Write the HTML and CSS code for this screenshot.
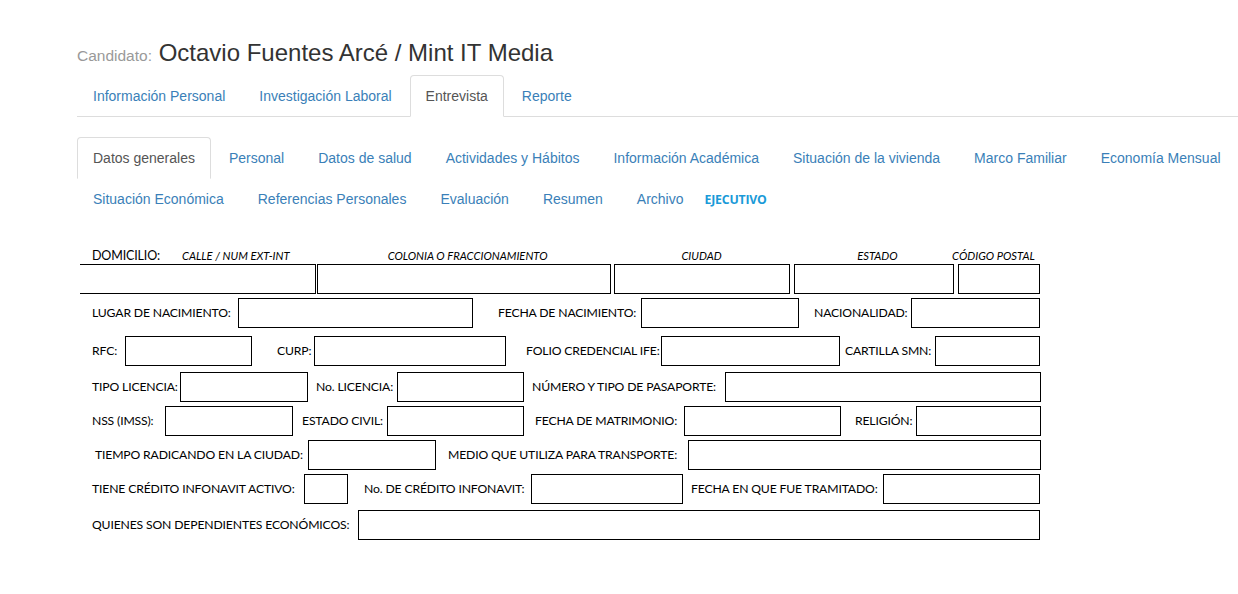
FILE: index.html
```html
<!DOCTYPE html>
<html lang="es">
<head>
<meta charset="utf-8">
<title>Entrevista - Datos generales</title>
<link rel="stylesheet" href="styles.css">
</head>
<body>
<div class="page">
  <h1 class="title"><small class="title-pre">Candidato:</small> Octavio Fuentes Arcé / Mint IT Media</h1>

  <ul class="tabs main-tabs">
    <li><a href="#">Información Personal</a></li>
    <li><a href="#">Investigación Laboral</a></li>
    <li class="active"><a href="#">Entrevista</a></li>
    <li><a href="#">Reporte</a></li>
  </ul>

  <div class="subtabs">
    <ul class="tabs sub-row">
      <li class="active"><a href="#">Datos generales</a></li>
      <li><a href="#">Personal</a></li>
      <li><a href="#">Datos de salud</a></li>
      <li><a href="#">Actividades y Hábitos</a></li>
      <li><a href="#">Información Académica</a></li>
      <li><a href="#">Situación de la vivienda</a></li>
      <li><a href="#">Marco Familiar</a></li>
      <li><a href="#">Economía Mensual</a></li>
    </ul>
    <ul class="tabs sub-row second">
      <li><a href="#">Situación Económica</a></li>
      <li><a href="#">Referencias Personales</a></li>
      <li><a href="#">Evaluación</a></li>
      <li><a href="#">Resumen</a></li>
      <li><a href="#">Archivo</a></li>
      <li class="exec"><a href="#">EJECUTIVO</a></li>
    </ul>
  </div>

  <div class="form">
    <div class="hrow">
      <span class="dom">DOMICILIO:</span>
      <span class="hint h-calle">CALLE / NUM EXT-INT</span>
      <span class="hint h-col">COLONIA O FRACCIONAMIENTO</span>
      <span class="hint h-ciu">CIUDAD</span>
      <span class="hint h-edo">ESTADO</span>
      <span class="hint h-cp">CÓDIGO POSTAL</span>
    </div>
    <div class="row r1">
      <span class="box b-calle"></span>
      <span class="box b-col"></span>
      <span class="box b-ciu"></span>
      <span class="box b-edo"></span>
      <span class="box b-cp"></span>
    </div>
    <div class="row r2">
      <span class="lbl lugar-l">LUGAR DE NACIMIENTO:</span><span class="box lugar-b"></span>
      <span class="lbl fnac-l">FECHA DE NACIMIENTO:</span><span class="box fnac-b"></span>
      <span class="lbl nac-l">NACIONALIDAD:</span><span class="box nac-b"></span>
    </div>
    <div class="row r3">
      <span class="lbl rfc-l">RFC:</span><span class="box rfc-b"></span>
      <span class="lbl curp-l">CURP:</span><span class="box curp-b"></span>
      <span class="lbl ife-l">FOLIO CREDENCIAL IFE:</span><span class="box ife-b"></span>
      <span class="lbl smn-l">CARTILLA SMN:</span><span class="box smn-b"></span>
    </div>
    <div class="row r4">
      <span class="lbl tlic-l">TIPO LICENCIA:</span><span class="box tlic-b"></span>
      <span class="lbl nlic-l">No. LICENCIA:</span><span class="box nlic-b"></span>
      <span class="lbl pas-l">NÚMERO Y TIPO DE PASAPORTE:</span><span class="box pas-b"></span>
    </div>
    <div class="row r5">
      <span class="lbl nss-l">NSS (IMSS):</span><span class="box nss-b"></span>
      <span class="lbl civ-l">ESTADO CIVIL:</span><span class="box civ-b"></span>
      <span class="lbl mat-l">FECHA DE MATRIMONIO:</span><span class="box mat-b"></span>
      <span class="lbl rel-l">RELIGIÓN:</span><span class="box rel-b"></span>
    </div>
    <div class="row r6">
      <span class="lbl rad-l">TIEMPO RADICANDO EN LA CIUDAD:</span><span class="box rad-b"></span>
      <span class="lbl tra-l">MEDIO QUE UTILIZA PARA TRANSPORTE:</span><span class="box tra-b"></span>
    </div>
    <div class="row r7">
      <span class="lbl act-l">TIENE CRÉDITO INFONAVIT ACTIVO:</span><span class="box act-b"></span>
      <span class="lbl ncr-l">No. DE CRÉDITO INFONAVIT:</span><span class="box ncr-b"></span>
      <span class="lbl tram-l">FECHA EN QUE FUE TRAMITADO:</span><span class="box tram-b"></span>
    </div>
    <div class="row r8">
      <span class="lbl dep-l">QUIENES SON DEPENDIENTES ECONÓMICOS:</span><span class="box dep-b"></span>
    </div>
  </div>
</div>
</body>
</html>
```

FILE: styles.css
```css
* { box-sizing: border-box; }

html, body {
  margin: 0;
  padding: 0;
  background: #fff;
}

body {
  font-family: "Liberation Sans", Arial, sans-serif;
  font-size: 14px;
  line-height: 20px;
  color: #333;
}

.page {
  padding: 39px 0 0 77px;
}

.title {
  margin: 0 0 8px 0;
  height: 28px;
  font-size: 24px;
  line-height: 28px;
  font-weight: normal;
  color: #333;
  white-space: nowrap;
}

.title-pre {
  font-size: 15.5px;
  color: #999;
}

/* tabs */
.tabs {
  list-style: none;
  margin: 0;
  padding: 0;
  display: flex;
  white-space: nowrap;
}

.tabs li {
  margin-right: 2px;
}

.tabs a {
  display: block;
  padding: 10px 15px;
  line-height: 20px;
  border: 1px solid transparent;
  border-radius: 4px 4px 0 0;
  color: #3a7fb8;
  text-decoration: none;
}

.tabs li.active a {
  color: #555;
  background: #fff;
  border-color: #ddd #ddd transparent #ddd;
}

.main-tabs {
  border-bottom: 1px solid #ddd;
  height: 42px;
}

.main-tabs li {
  margin-bottom: -1px;
}

.subtabs {
  margin-top: 20px;
}

.sub-row.second {
  margin-top: -1px;
}

.tabs li.exec a {
  padding: 11px 2px 9px 2px;
  font-family: "Open Sans", "Noto Sans", sans-serif;
  font-size: 12.3px;
  font-weight: bold;
  color: #1a9ad8;
  letter-spacing: -0.2px;
}

/* form */
.form {
  margin: 28px 0 0 3px;
  width: 962px;
  font-family: Lato, "Noto Sans", sans-serif;
  font-size: 12.2px;
  letter-spacing: -0.15px;
  color: #000;
}

.hrow {
  display: flex;
  align-items: center;
  height: 16px;
  line-height: 16px;
  white-space: nowrap;
}

.dom {
  margin-left: 12px;
  width: 90px;
  font-size: 12.5px;
}

.hint {
  font-style: italic;
  font-size: 11.2px;
  letter-spacing: 0;
}

.h-calle { width: 206px; }
.h-col { width: 294px; }
.h-ciu { width: 176px; }
.h-edo { width: 95px; }
.h-cp { width: 90px; }

.row {
  display: flex;
  align-items: center;
  height: 30px;
  white-space: nowrap;
}

.r1 { margin-top: 0; }
.r2 { margin-top: 4px; }
.r3 { margin-top: 8px; }
.r4 { margin-top: 6px; }
.r5 { margin-top: 4px; }
.r6 { margin-top: 4px; }
.r7 { margin-top: 4px; }
.r8 { margin-top: 6px; }

.box {
  display: block;
  height: 30px;
  border: 1px solid #000;
  flex: none;
}

.lbl {
  display: block;
  flex: none;
  overflow: visible;
}

/* domicilio */
.b-calle { width: 236px; border-left: none; }
.b-col { margin-left: 1px; width: 294px; }
.b-ciu { margin-left: 3px; width: 176px; }
.b-edo { margin-left: 4px; width: 160px; }
.b-cp { margin-left: 4px; width: 82px; }

/* row 2 */
.lugar-l { margin-left: 12px; width: 146px; }
.lugar-b { width: 235px; }
.fnac-l { margin-left: 25px; width: 143px; }
.fnac-b { width: 158px; }
.nac-l { margin-left: 15px; width: 97px; }
.nac-b { width: 129px; }

/* row 3 */
.rfc-l { margin-left: 12px; width: 33px; }
.rfc-b { width: 127px; }
.curp-l { margin-left: 25px; width: 37px; }
.curp-b { width: 192px; }
.ife-l { margin-left: 20px; width: 135px; }
.ife-b { width: 179px; }
.smn-l { margin-left: 5px; width: 90px; }
.smn-b { width: 105px; }

/* row 4 */
.tlic-l { margin-left: 12px; width: 88px; }
.tlic-b { width: 128px; }
.nlic-l { margin-left: 8px; width: 81px; }
.nlic-b { width: 127px; }
.pas-l { margin-left: 8px; width: 193px; }
.pas-b { width: 316px; }

/* row 5 */
.nss-l { margin-left: 12px; width: 73px; }
.nss-b { width: 128px; }
.civ-l { margin-left: 9px; width: 85px; }
.civ-b { width: 137px; }
.mat-l { margin-left: 11px; width: 149px; }
.mat-b { width: 157px; }
.rel-l { margin-left: 14px; width: 61px; }
.rel-b { width: 125px; }

/* row 6 */
.rad-l { margin-left: 15px; width: 213px; }
.rad-b { width: 128px; }
.tra-l { margin-left: 12px; width: 240px; }
.tra-b { width: 353px; }

/* row 7 */
.act-l { margin-left: 12px; width: 212px; }
.act-b { width: 44px; }
.ncr-l { margin-left: 16px; width: 167px; }
.ncr-b { width: 152px; }
.tram-l { margin-left: 8px; width: 192px; }
.tram-b { width: 157px; }

/* row 8 */
.dep-l { margin-left: 12px; width: 266px; }
.dep-b { width: 682px; }
```
